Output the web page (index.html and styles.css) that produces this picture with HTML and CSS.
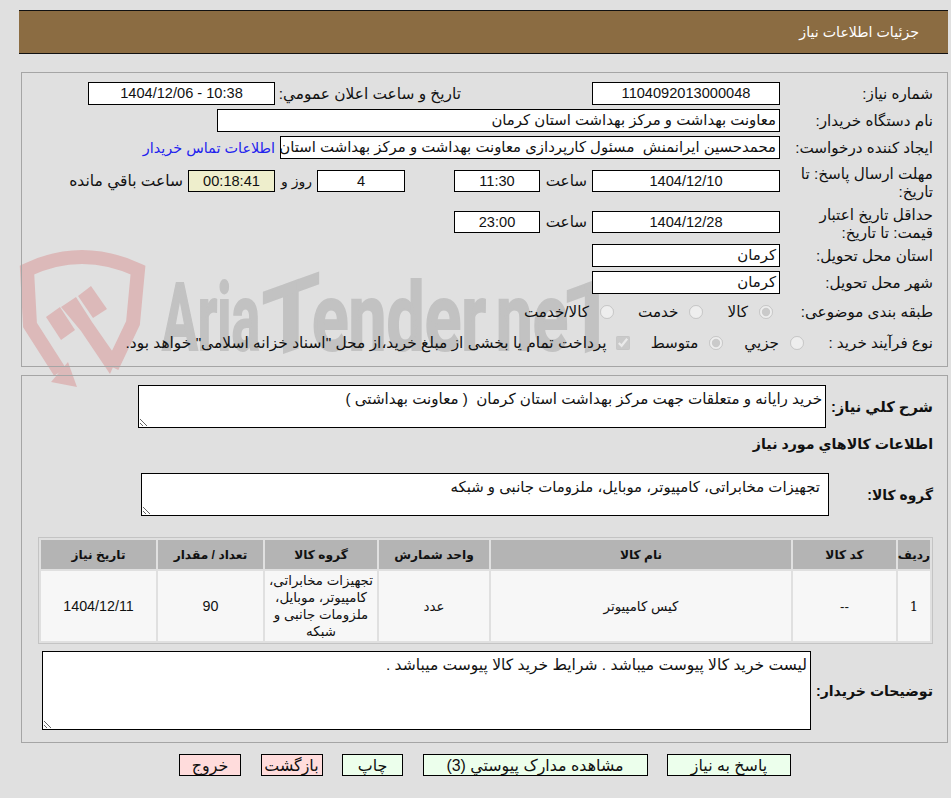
FILE: index.html
```html
<!DOCTYPE html>
<html lang="fa" dir="rtl">
<head>
  <title>جزئیات اطلاعات نیاز</title>
  <meta charset="utf-8">
  <link rel="stylesheet" href="styles.css">
</head>
<body>
    <svg class="watermark" width="951" height="798" viewBox="0 0 951 798" aria-hidden="true">
        <g class="wm-shield">
            <path class="wm-ring" d="M112 367 L133 323 L138 270 Q110 257 82 257 Q54 257 27 270 L30 325 L60 372" />
            <polygon points="68,362 77,387 51,382" />
            <polygon points="78,296 91,286 107,309 93,318" />
            <polygon points="61,307 76,297 92,322 117,358 110,374 81,331" />
            <polygon points="46,317 60,307 75,330 61,340" />
        </g>
        <g class="wm-name" direction="ltr">
            <text x="162" y="350" textLength="98" lengthAdjust="spacingAndGlyphs">Aria</text>
            <text x="262" y="350" textLength="58" lengthAdjust="spacingAndGlyphs" transform="translate(0 106) skewY(-20)">T</text>
            <text x="312" y="350" textLength="174" lengthAdjust="spacingAndGlyphs">ender</text>
            <text x="496" y="350" textLength="72" lengthAdjust="spacingAndGlyphs">ne</text>
            <text x="566" y="350" textLength="52" lengthAdjust="spacingAndGlyphs" transform="translate(0 215) skewY(-20)">T</text>
        </g>
    </svg>

    <div class="page-title">جزئیات اطلاعات نیاز</div>

    <div class="panel panel-info">
        <div class="row">
            <div class="label">شماره نیاز:</div>
            <div class="field center w-188">1104092013000048</div>
            <div class="label label-public">تاریخ و ساعت اعلان عمومي:</div>
            <div class="field center w-187">10:38 - 1404/12/06</div>
        </div>
        <div class="row">
            <div class="label">نام دستگاه خریدار:</div>
            <div class="field w-563">معاونت بهداشت و مرکز بهداشت استان کرمان</div>
        </div>
        <div class="row">
            <div class="label">ایجاد کننده درخواست:</div>
            <div class="field w-500">محمدحسین ایرانمنش  مسئول کارپردازی معاونت بهداشت و مرکز بهداشت استان کرمان</div>
            <a class="contact" href="#">اطلاعات تماس خریدار</a>
        </div>
        <div class="row row-tall">
            <div class="label label-wrap">مهلت ارسال پاسخ: تا تاریخ:</div>
            <div class="field center w-188">1404/12/10</div>
            <div class="unit">ساعت</div>
            <div class="field center w-86">11:30</div>
            <div class="field center w-88 days">4</div>
            <div class="unit days-text">روز و</div>
            <div class="field center w-87 timer">00:18:41</div>
            <div class="unit remain">ساعت باقي مانده</div>
        </div>
        <div class="row row-tall">
            <div class="label label-wrap">حداقل تاریخ اعتبار قیمت: تا تاریخ:</div>
            <div class="field center w-188">1404/12/28</div>
            <div class="unit">ساعت</div>
            <div class="field center w-86">23:00</div>
        </div>
        <div class="row">
            <div class="label">استان محل تحویل:</div>
            <div class="field w-188">کرمان</div>
        </div>
        <div class="row">
            <div class="label">شهر محل تحویل:</div>
            <div class="field w-188">کرمان</div>
        </div>
        <div class="row row-options">
            <div class="label">طبقه بندی موضوعی:</div>
            <label class="option first"><input type="radio" name="subject" checked disabled>کالا</label>
            <label class="option"><input type="radio" name="subject" disabled>خدمت</label>
            <label class="option"><input type="radio" name="subject" disabled>کالا/خدمت</label>
        </div>
        <div class="row row-options row-process">
            <div class="label label-process">نوع فرآیند خرید :</div>
            <label class="option"><input type="radio" name="process" disabled>جزیي</label>
            <label class="option"><input type="radio" name="process" checked disabled>متوسط</label>
            <label class="option option-check"><input type="checkbox" checked disabled>پرداخت تمام یا بخشی از مبلغ خرید،از محل "اسناد خزانه اسلامی" خواهد بود.</label>
        </div>
    </div>

    <div class="panel panel-goods">
        <div class="row row-area">
            <div class="label-bold l-need">شرح کلي نیاز:</div>
            <textarea class="area area-need" readonly>خرید رایانه و متعلقات جهت مرکز بهداشت استان کرمان  ( معاونت بهداشتی )</textarea>
        </div>
        <h3 class="goods-title">اطلاعات کالاهاي مورد نیاز</h3>
        <div class="row row-area row-group">
            <div class="label-bold l-group">گروه کالا:</div>
            <textarea class="area area-group" readonly>تجهیزات مخابراتی، کامپیوتر، موبایل، ملزومات جانبی و شبکه</textarea>
        </div>
        <table class="goods">
            <colgroup>
                <col class="c-row"><col class="c-code"><col class="c-name"><col class="c-unit"><col class="c-group"><col class="c-qty"><col class="c-date">
            </colgroup>
            <thead>
                <tr>
                    <th>ردیف</th>
                    <th>کد کالا</th>
                    <th>نام کالا</th>
                    <th>واحد شمارش</th>
                    <th>گروه کالا</th>
                    <th>تعداد / مقدار</th>
                    <th>تاریخ نیاز</th>
                </tr>
            </thead>
            <tbody>
                <tr>
                    <td class="num">1</td>
                    <td>--</td>
                    <td>کیس کامپیوتر</td>
                    <td>عدد</td>
                    <td>تجهیزات مخابراتی، کامپیوتر، موبایل، ملزومات جانبی و شبکه</td>
                    <td class="digits">90</td>
                    <td class="digits">1404/12/11</td>
                </tr>
            </tbody>
        </table>
        <div class="row row-area row-notes">
            <div class="label-bold l-notes">توضیحات خریدار:</div>
            <textarea class="area area-notes" readonly>لیست خرید کالا پیوست میباشد . شرایط خرید کالا پیوست میباشد .</textarea>
        </div>
    </div>

    <div class="actions">
        <button class="btn btn-green b-reply" type="button">پاسخ به نیاز</button>
        <button class="btn btn-green b-docs" type="button">مشاهده مدارک پیوستي (3)</button>
        <button class="btn btn-green b-print" type="button">چاپ</button>
        <button class="btn btn-red b-small" type="button">بازگشت</button>
        <button class="btn btn-red b-small" type="button">خروج</button>
    </div>
</body>
</html>
```

FILE: styles.css
```css
html, body {
    margin: 0;
    padding: 0;
}
body {
    position: relative;
    width: 951px;
    height: 798px;
    overflow: hidden;
    box-sizing: border-box;
    padding: 10px 3px 0 19px;
    background: #e0e0e0;
    color: #111;
    font-family: "Liberation Sans", "DejaVu Sans", sans-serif;
    font-size: 15.2px;
}
.watermark {
    position: absolute;
    top: 0;
    left: 0;
    z-index: -1;
}
.wm-shield polygon {
    fill: #dcb9b9;
}
.wm-shield .wm-ring {
    fill: none;
    stroke: #dcb9b9;
    stroke-width: 14;
}
.wm-name text {
    fill: #c2c2c2;
    stroke: #c2c2c2;
    stroke-width: 2;
    font-family: "Roboto", sans-serif;
    font-weight: 700;
    font-size: 95px;
}
.page-title {
    height: 42px;
    line-height: 42px;
    padding-right: 29px;
    background: #8b6c42;
    border-top: 1px solid #111;
    border-bottom: 1px solid #111;
    color: #fff;
    font-size: 14.2px;
}
.panel {
    margin-left: 2px;
    border: 1px solid #a5a5a5;
    box-sizing: border-box;
}
.panel-info {
    height: 295px;
    margin-top: 18px;
    padding: 9px 14px 0 0;
}
.panel-goods {
    height: 368px;
    margin-top: 8px;
    padding: 9px 14px 0 0;
}
.row {
    display: flex;
    align-items: center;
    height: 23px;
    margin-bottom: 4px;
}
.row-tall {
    height: 36px;
}
.row-tall + .row-tall {
    height: 37px;
}
.label {
    flex: none;
    width: 153px;
    white-space: nowrap;
}
.label-wrap {
    box-sizing: border-box;
    white-space: normal;
    line-height: 18px;
    padding: 4px 0 0 12px;
}
.label-public {
    width: 181px;
    margin: 0 131px 0 5px;
    font-size: 15.4px;
}
.label-process {
    width: 129px;
}
.field {
    flex: none;
    box-sizing: border-box;
    height: 23px;
    line-height: 21px;
    padding: 0 3px;
    border: 1px solid #000;
    background: #fff;
    font-size: 14.9px;
    overflow: hidden;
    white-space: pre;
}
.row-tall .field {
    height: 22px;
    line-height: 20px;
}
.center {
    text-align: center;
}
.field.center {
    font-size: 14.6px;
}
.w-187 { width: 187px; }
.w-188 { width: 188px; }
.w-563 { width: 563px; }
.w-500 { width: 500px; }
.w-86 { width: 86px; }
.w-87 { width: 87px; }
.w-88 { width: 88px; }
.contact {
    margin-right: 5px;
    color: #2222ee;
    font-size: 14.4px;
    text-decoration: none;
    white-space: nowrap;
}
.unit {
    flex: none;
    width: 52px;
    padding-right: 5px;
    box-sizing: border-box;
    white-space: nowrap;
}
.days {
    margin-right: 49px;
}
.days-text {
    width: 42px;
    font-size: 14px;
}
.timer {
    background: #eeeecc;
}
.remain {
    width: auto;
    font-size: 15.5px;
}
.row-options {
    height: 28px;
}
.row-process {
    height: 26px;
}
.option {
    display: flex;
    align-items: center;
    margin-left: 24px;
    white-space: nowrap;
}
.row-process .option {
    margin-left: 21px;
}
.option input {
    width: 14px;
    height: 14px;
    margin: 0 0 0 11px;
}
.option.first {
    margin-right: 7px;
}
.row-process .option-check {
    margin-left: 0;
    font-size: 15.45px;
}
.option-check input {
    margin-left: 9px;
}
.label-bold {
    flex: none;
    font-size: 14.7px;
    font-weight: bold;
    white-space: nowrap;
}
.l-need { width: 107px; }
.l-group { width: 104px; font-size: 13.9px; }
.l-notes { width: 122px; font-size: 14.1px; }
.row-area {
    height: auto;
    margin-bottom: 0;
    justify-content: flex-start;
}
.area {
    flex: none;
    box-sizing: border-box;
    border: 1px solid #000;
    border-radius: 0;
    background: #fff;
    color: #111;
    font-family: inherit;
    font-size: 15.15px;
    padding: 4px 3px 2px;
    outline: none;
}
.area-need,
.area-group {
    width: 688px;
    height: 43px;
}
.area-group {
    padding-right: 8px;
    font-size: 14.95px;
}
.area-notes {
    width: 769px;
    height: 79px;
    font-size: 15.55px;
}
.goods-title {
    margin: 5px 0 0;
    height: 23px;
    line-height: 23px;
    font-size: 14.2px;
}
.row-group {
    margin-top: 17px;
}
.goods {
    width: 895px;
    height: 107px;
    margin: 21px 0 7px 0;
    border: 1px solid #c4c4c4;
    border-spacing: 2px;
    table-layout: fixed;
    font-size: 13.4px;
}
.goods th {
    height: 29px;
    padding: 0;
    background: #b4b4b4;
    font-size: 12.2px;
}
.goods td {
    height: 70px;
    padding: 0 2px;
    background: #f7f7f7;
    text-align: center;
    line-height: 17px;
}
.goods td.digits {
    font-size: 14.3px;
}
.goods td.num {
    font-family: "DejaVu Serif", serif;
    font-size: 13px;
}
.c-row { width: 32px; }
.c-code { width: 103px; }
.c-name { width: 300px; }
.c-unit { width: 110px; }
.c-group { width: 112px; }
.c-qty { width: 105px; }
.actions {
    display: flex;
    justify-content: center;
    gap: 19.5px;
    margin-top: 11px;
    padding-left: 3px;
}
.btn {
    box-sizing: border-box;
    height: 22px;
    padding: 0;
    border: 1px solid #000;
    color: #111;
    font-family: inherit;
    font-size: 15.9px;
}
.btn-green {
    background: #ecffec;
}
.btn-red {
    background: #ffdcdc;
}
.b-reply { width: 124px; }
.b-docs { width: 225px; }
.b-print { width: 61px; }
.b-small { width: 62px; }
```
